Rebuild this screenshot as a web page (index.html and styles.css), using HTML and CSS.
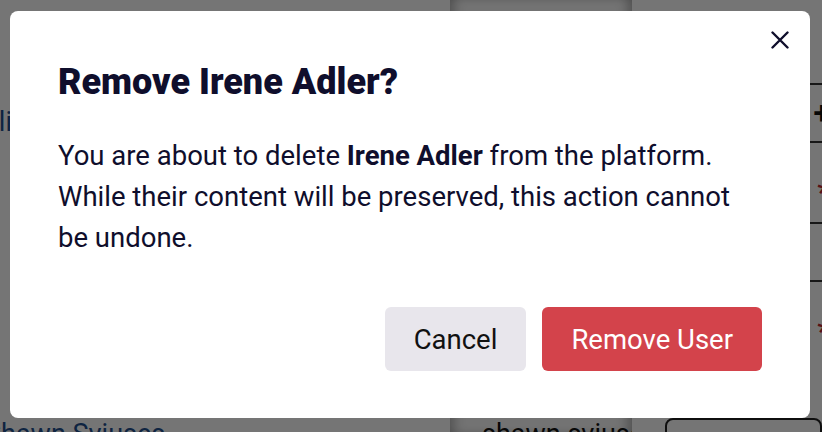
FILE: index.html
```
<!DOCTYPE html>
<html>
<head>
  <meta charset="utf-8">
  <link rel="stylesheet" href="styles.css">
</head>
<body>
  <div class="page">
    <div class="side">
      <div class="side-link first"><span>Irene Adler Emili</span></div>
      <div class="side-link last">Shawn Sviuses</div>
    </div>
    <div class="middle">
      <div class="panel">
        <div class="panel-name">shawn sviuses</div>
      </div>
    </div>
    <div class="table">
      <div class="cell"><span class="plus">+</span></div>
      <div class="cell"><span class="req">*</span></div>
      <div class="cell"></div>
      <div class="cell"><span class="req">*</span></div>
      <div class="cell last"><div class="field"></div></div>
    </div>
  </div>

  <div class="overlay"></div>

  <div class="dialog">
    <button class="close" aria-label="Close">
      <svg width="18" height="18" viewBox="0 0 18 18">
        <path d="M1.5 1.5 L16.5 16.5 M16.5 1.5 L1.5 16.5" stroke="#0f0e2c" stroke-width="2.4" stroke-linecap="round"/>
      </svg>
    </button>
    <h1 class="title">Remove Irene Adler?</h1>
    <p class="text">You are about to delete <b>Irene Adler</b> from the platform. While their content will be preserved, this action cannot be undone.</p>
    <div class="actions">
      <button class="btn cancel">Cancel</button>
      <button class="btn remove">Remove User</button>
    </div>
  </div>
</body>
</html>
```
FILE: styles.css
```
body {
  margin: 0;
  font-family: Roboto, "Liberation Sans", sans-serif;
  background: #fff;
  overflow: hidden;
}

.page {
  display: flex;
  height: 432px;
}

.side {
  width: 450px;
  flex-shrink: 0;
  display: flex;
  flex-direction: column;
  justify-content: space-between;
  padding-top: 106px;
  box-sizing: border-box;
}

.side-link {
  color: #1f4f8f;
  font-size: 27px;
  white-space: nowrap;
}

.side-link.first {
  width: 12px;
  display: flex;
  justify-content: flex-end;
}

.side-link.last {
  margin-left: -15px;
  margin-bottom: -18px;
}

.middle {
  width: 182px;
  flex-shrink: 0;
}

.panel {
  height: 100%;
  background: #fafafa;
  box-shadow: inset 10px 0 12px -6px rgba(0, 0, 0, 0.3), inset -10px 0 12px -6px rgba(0, 0, 0, 0.3);
  display: flex;
  flex-direction: column;
  justify-content: flex-end;
  overflow: hidden;
}

.panel-name {
  font-size: 27px;
  color: #111;
  padding-left: 32px;
  margin-bottom: -18px;
  white-space: nowrap;
}

.table {
  flex: 1;
  min-width: 0;
  display: flex;
  flex-direction: column;
  padding-top: 83px;
}

.cell {
  box-sizing: border-box;
  border-top: 2px solid #333;
  height: 58px;
  display: flex;
  align-items: center;
  justify-content: flex-end;
  font-size: 32px;
}

.cell:nth-child(2),
.cell:nth-child(4) {
  height: 81px;
}

.cell.last {
  border-top: 0;
  justify-content: flex-start;
  align-items: flex-start;
}

.plus {
  color: #111;
  font-weight: 700;
  margin-right: -9px;
}

.req {
  color: #c0282f;
  margin-right: -9px;
  margin-top: 18px;
}

.field {
  margin-left: 33px;
  margin-top: 57px;
  width: 200px;
  height: 20px;
  border: 2px solid #222;
  border-radius: 8px;
}

.overlay {
  position: fixed;
  inset: 0;
  background: rgba(0, 0, 0, 0.54);
}

.dialog {
  position: fixed;
  left: 10px;
  top: 11px;
  width: 800px;
  height: 407px;
  box-sizing: border-box;
  background: #fff;
  border-radius: 8px;
  padding: 48px 48px 0 48px;
  color: #0f0e2c;
}

.close {
  position: absolute;
  top: 12px;
  right: 13px;
  width: 34px;
  height: 34px;
  border: 0;
  background: none;
  padding: 0;
  display: flex;
  align-items: center;
  justify-content: center;
}

.title {
  margin: 0;
  font-size: 36px;
  font-weight: 900;
  line-height: 46px;
}

.text {
  margin: 30px 0 0;
  font-size: 27.5px;
  line-height: 41px;
  max-width: 690px;
}

.text b {
  font-weight: 700;
}

.actions {
  display: flex;
  justify-content: flex-end;
  gap: 16px;
  margin-top: 49px;
}

.btn {
  font-family: Roboto, "Liberation Sans", sans-serif;
  font-size: 27.5px;
  height: 64px;
  border: 0;
  border-radius: 6px;
  padding: 0 29px;
}

.cancel {
  background: #e8e6ec;
  color: #111;
}

.remove {
  background: #d3434b;
  color: #fff;
}
```
